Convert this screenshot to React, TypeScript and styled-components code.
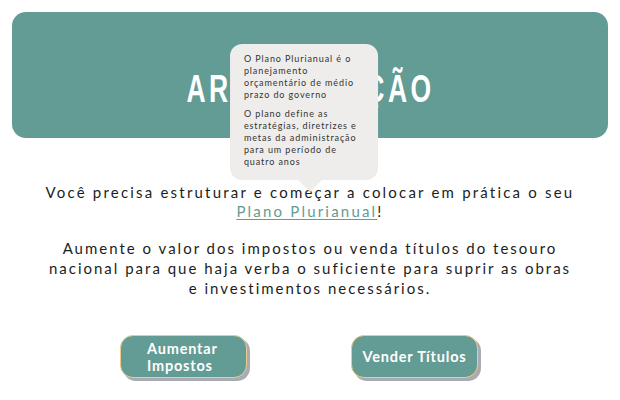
import React from 'react';
import styled, { createGlobalStyle } from 'styled-components';

const TEAL = '#639c94';
const SAND = '#efc98b';

const GlobalStyle = createGlobalStyle`
  html, body {
    margin: 0;
    padding: 0;
    background: #ffffff;
  }
  body {
    font-family: Lato, 'DejaVu Sans', sans-serif;
    color: #1d1d1d;
  }
`;

const StyledPage = styled.div`
  width: 620px;
  height: 400px;
  box-sizing: border-box;
  padding: 12px 12px 0;
  display: flex;
  flex-direction: column;
  align-items: center;
  overflow: hidden;
`;

const StyledHeader = styled.header`
  width: 100%;
  height: 126px;
  box-sizing: border-box;
  padding-top: 57px;
  border-radius: 14px;
  background-color: ${TEAL};
  display: flex;
  justify-content: center;
`;

// narrow display face: the bold sans is squeezed to a condensed width
const StyledTitle = styled.h1`
  margin: 0;
  height: 40px;
  font-family: 'Liberation Sans', Arial, sans-serif;
  font-weight: 700;
  font-size: 39px;
  line-height: 40px;
  letter-spacing: 5px;
  color: #ffffff;
  transform: scaleX(0.68);
  white-space: nowrap;
`;

const StyledText = styled.p`
  margin: 0;
  text-align: center;
  font-size: 15px;
  font-weight: 400;
  letter-spacing: 2.2px;
  line-height: 19px;
`;

const StyledIntro = styled(StyledText)`
  margin-top: 45px;
`;

const StyledTask = styled(StyledText)`
  margin-top: 17px;
  line-height: 20px;
  width: 528px;
  letter-spacing: 2px;
`;

const StyledLinkWrap = styled.span`
  position: relative;
  display: inline-block;
`;

const StyledLink = styled.span`
  color: ${TEAL};
  text-decoration: underline;
  text-underline-offset: 2px;
  text-decoration-thickness: 1px;
`;

const StyledTooltip = styled.div`
  position: absolute;
  left: 50%;
  bottom: calc(100% + 22px);
  transform: translateX(-52%);
  width: 148px;
  box-sizing: border-box;
  padding: 9px 10px 12px 14px;
  border-radius: 12px;
  background-color: #eeedeb;
  text-align: left;
  color: #333333;
  font-size: 9px;
  line-height: 12px;
  letter-spacing: 0.9px;
  &::after {
    content: '';
    position: absolute;
    top: 100%;
    left: 68px;
    border-left: 12px solid transparent;
    border-right: 12px solid transparent;
    border-top: 12px solid #eeedeb;
  }
`;

const StyledTooltipPara = styled.p`
  margin: 0;
  & + & {
    margin-top: 7px;
  }
`;

const StyledActions = styled.div`
  margin-top: 37px;
  margin-right: 22px;
  display: flex;
  gap: 104px;
`;

type StyledButtonProps = { $twoLines?: boolean };
const StyledButton = styled.button<StyledButtonProps>`
  width: 127px;
  height: 43px;
  box-sizing: border-box;
  border: 1.5px solid ${SAND};
  border-radius: 13px;
  background-color: ${TEAL};
  box-shadow: 3px 3px 0 #a9abb2;
  color: #ffffff;
  font-family: Lato, 'DejaVu Sans', sans-serif;
  font-weight: 700;
  font-size: 14.5px;
  line-height: 17px;
  letter-spacing: 0.8px;
  padding: 0 ${({ $twoLines }) => ($twoLines ? '26px' : '6px')};
  text-align: ${({ $twoLines }) => ($twoLines ? 'left' : 'center')};
  cursor: pointer;
`;

const App: React.FC = () => (
  <>
    <GlobalStyle />
    <StyledPage>
      <StyledHeader>
        <StyledTitle>ARRECADAÇÃO</StyledTitle>
      </StyledHeader>
      <StyledIntro>
        Você precisa estruturar e começar a colocar em prática o seu
        <br />
        <StyledLinkWrap>
          <StyledLink>Plano Plurianual</StyledLink>
          <StyledTooltip>
            <StyledTooltipPara>
              O Plano Plurianual é o planejamento orçamentário de médio prazo
              do governo
            </StyledTooltipPara>
            <StyledTooltipPara>
              O plano define as estratégias, diretrizes e metas da
              administração para um período de quatro anos
            </StyledTooltipPara>
          </StyledTooltip>
        </StyledLinkWrap>
        !
      </StyledIntro>
      <StyledTask>
        Aumente o valor dos impostos ou venda títulos do tesouro nacional para
        que haja verba o suficiente para suprir as obras e investimentos
        necessários.
      </StyledTask>
      <StyledActions>
        <StyledButton $twoLines>Aumentar Impostos</StyledButton>
        <StyledButton>Vender Títulos</StyledButton>
      </StyledActions>
    </StyledPage>
  </>
);

export default App;
